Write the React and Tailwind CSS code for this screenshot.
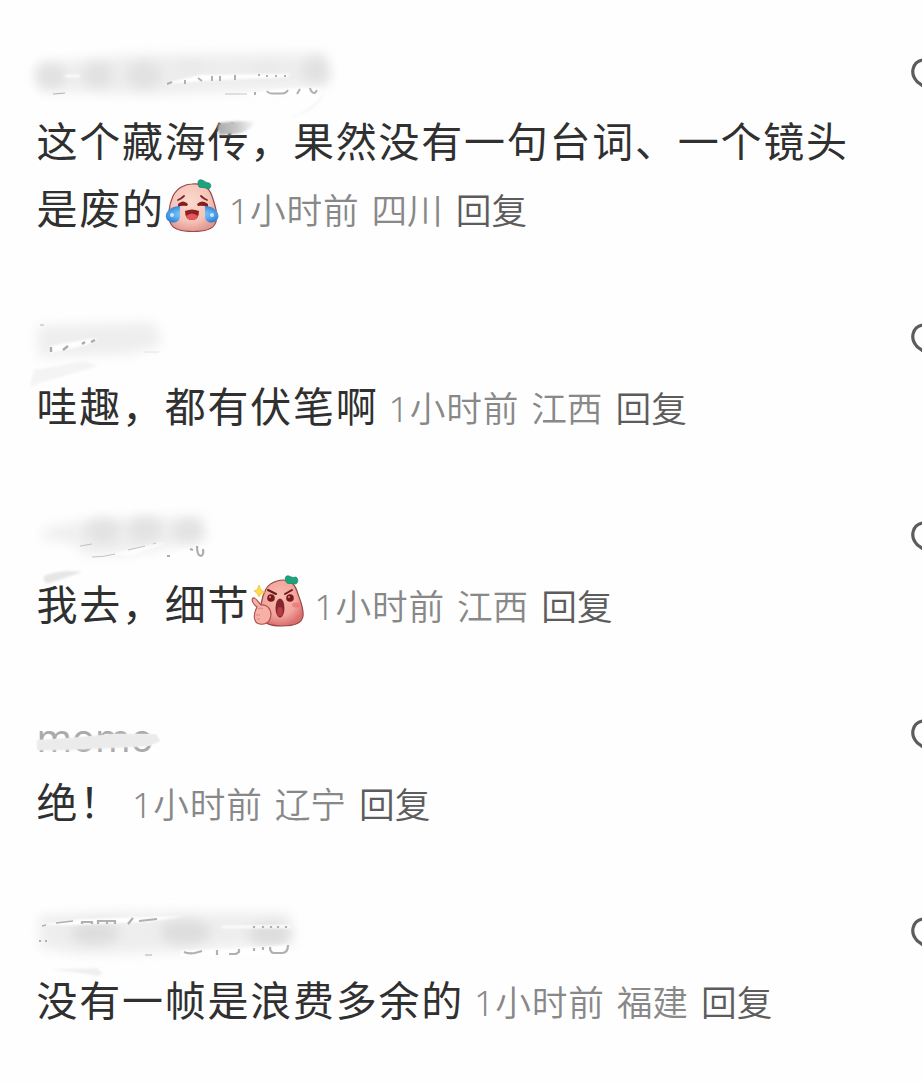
import React from 'react';

// Peach sticker, laughing with tears
function LaughingPeach() {
  return (
    <svg viewBox="0 0 54 56" className="inline-block w-[54px] h-[56px] align-[-10px]">
      <defs>
        <radialGradient id="peachLaugh" cx="45%" cy="38%" r="62%">
          <stop offset="0" stopColor="#fbd9cd" />
          <stop offset="0.65" stopColor="#f6c4b9" />
          <stop offset="1" stopColor="#e39a94" />
        </radialGradient>
        <radialGradient id="tear" cx="50%" cy="50%" r="60%">
          <stop offset="0" stopColor="#b5e2ff" />
          <stop offset="0.5" stopColor="#68b7f5" />
          <stop offset="1" stopColor="#2d7fd0" />
        </radialGradient>
      </defs>
      <path d="M27 6C37 5 44 9 47 18C50 27 54 38 50 46C47 52 38 53.500 28 53.500C17 53.500 9 52 6 46C2 39 4 27 8 18C12 10 20 6 27 6Z" fill="url(#peachLaugh)" stroke="#9a4b4a" strokeWidth="1.2" />
      <path d="M34 9C32 4 33 1 37 2C40 3 41 5 44 5C47 6 46 11 43 11C40 9 37 10 34 9Z" fill="#1ba37b" stroke="#0c8465" strokeWidth=".7" />
      <path d="M13 22Q16 21 19 18M36 18Q39 21 42 22" fill="none" stroke="#7b2727" strokeWidth="1.8" strokeLinecap="round" />
      <path d="M13 26Q18 21 23 26L22 28Q17 27 13 29ZM32 26Q37 21 43 26L43 29Q37 27 33 28Z" fill="#81201f" />
      <path d="M20 33Q27 30 34 33Q34 42 27 42Q20 42 20 33Z" fill="#8c2022" />
      <path d="M21 38Q27 33 33 38Q31 42 27 42Q23 42 21 38Z" fill="#e8555a" />
      <path d="M15 28C8 28 1 32 .8 38C1 46 14 47 15 39ZM40 28C47 28 53 32 53.500 38C53 46 41 47 40 39Z" fill="url(#tear)" />
      <circle cx="7" cy="37" r="2" fill="#e4f6ff" opacity=".8" />
      <circle cx="47" cy="37" r="2" fill="#e4f6ff" opacity=".8" />
    </svg>
  );
}

// Peach sticker, shouting with thumb up
function AmazedPeach() {
  return (
    <svg viewBox="0 0 54 56" className="inline-block w-[54px] h-[56px] align-[-10px]">
      <defs>
        <radialGradient id="peachShout" cx="45%" cy="38%" r="62%">
          <stop offset="0" stopColor="#f8bcb0" />
          <stop offset="0.65" stopColor="#f2a49c" />
          <stop offset="1" stopColor="#dc7070" />
        </radialGradient>
      </defs>
      <path d="M27 7C37 4 44 8 47 17C49 24 54 33 53 42C52 50 43 52 32 52C21 52 14 50 12 44C9 37 11 24 16 15C19 10 23 8 27 7Z" fill="url(#peachShout)" stroke="#984645" strokeWidth="1.2" />
      <path d="M37 9C34 5 35 1 39 2C41 3 43 4 46 3C49 5 48 10 45 10C42 9 39 10 37 9Z" fill="#1ba37b" stroke="#0c8465" strokeWidth=".7" />
      <path d="M9 11L11 16L15 18L11 20L9 23L7 19L4 17L7 16Z" fill="#ffda4a" stroke="#e9b52e" strokeWidth=".6" />
      <path d="M18 16L26 20M42 16L35 20" stroke="#68191b" strokeWidth="2" strokeLinecap="round" />
      <circle cx="21" cy="24" r="3.8" fill="#77191e" />
      <circle cx="40" cy="24" r="3.8" fill="#77191e" />
      <circle cx="20" cy="23" r="1" fill="#eb8582" />
      <circle cx="39" cy="23" r="1" fill="#eb8582" />
      <ellipse cx="46" cy="31" rx="4" ry="2.500" fill="#ec7277" opacity=".7" />
      <ellipse cx="30" cy="34" rx="4.500" ry="9.500" fill="#842630" />
      <ellipse cx="30" cy="37.500" rx="2.800" ry="4.500" fill="#b83b43" />
      <path d="M7 33C3 30 1 26 3 24C6 23 8 28 11 31C17 30 21 35 21 41C20 48 16 51 10 50C3 49 3 40 7 33Z" fill="#f6b0a5" stroke="#a84e4b" strokeWidth="1.1" />
      <path d="M8 35Q11 33 13 35M6 41H10M7 45H10" fill="none" stroke="#dd8580" />
    </svg>
  );
}

function Smudge({ id, viewBox, className, children }) {
  return (
    <svg viewBox={viewBox} className={className} aria-hidden="true">
      <defs>
        <filter id={`${id}-soft`} x="-30%" y="-100%" width="160%" height="300%">
          <feGaussianBlur stdDeviation="6" />
        </filter>
        <filter id={`${id}-fine`} x="-30%" y="-100%" width="160%" height="300%">
          <feGaussianBlur stdDeviation="1.3" />
        </filter>
        <linearGradient id={`${id}-fade`} x1="0" x2="1" y1="0" y2="0">
          <stop offset="0" stopColor="#aaa" />
          <stop offset=".5" stopColor="#c8c8c8" />
          <stop offset="1" stopColor="#fefefe" />
        </linearGradient>
      </defs>
      {children}
    </svg>
  );
}

function SmudgeOne() {
  return (
    <Smudge id="s1" viewBox="0 40 360 110" className="absolute left-0 -top-[4.5px] w-[360px] h-[110px]">
      <path d="M38 63L130 55L325 53L330 84L290 89L150 95L40 91Z" fill="#eeeeee" filter="url(#s1-soft)" />
      <g fill="#d9d9d9" opacity=".6" filter="url(#s1-soft)">
        <ellipse cx="50" cy="76" rx="16" ry="13" />
        <ellipse cx="98" cy="75" rx="15" ry="13" />
        <ellipse cx="144" cy="75" rx="18" ry="13" />
        <ellipse cx="190" cy="67" rx="15" ry="7" opacity=".4" />
        <ellipse cx="265" cy="68" rx="16" ry="6" opacity=".4" />
        <ellipse cx="316" cy="71" rx="14" ry="14" />
      </g>
      <path d="M163 84L200 75L290 74L288 77L220 80ZM240 94L285 89L322 88L312 96L240 97ZM65 75H80V77H65Z" fill="#fff" filter="url(#s1-fine)" />
      <g fill="none" stroke="#b0b0b0" strokeWidth="2">
        <path d="M167 84L172 82M185 80V84M198 78L202 81M212 76V81M220 76V81M235 75V80M258 75H260M267 75V77M276 75V77M285 75V77" />
        <path d="M53 94L65 93" strokeWidth="1.2" />
        <path d="M225 94H247" strokeWidth=".7" />
        <path d="M255 92V95M267 91Q268 93.500 273 93.500H282Q286 93.500 288 90M300 89L297 94M310 88Q311 93 315 93L317 90" />
      </g>
      <path d="M288 119Q312 109 324 93Q320 110 288 119Z" fill="#f7f7f7" filter="url(#s1-fine)" />
      <path d="M219 123Q235 120 256 122Q250 132 235 134L220 135Q216 129 219 123Z" fill="url(#s1-fade)" filter="url(#s1-fine)" />
    </Smudge>
  );
}

function SmudgeTwo() {
  return (
    <Smudge id="s2" viewBox="0 310 220 80" className="absolute left-0 top-[.5px] w-[220px] h-[80px]">
      <path d="M38 326L155 322L162 345L130 354L38 357Z" fill="#eeeeee" filter="url(#s2-soft)" />
      <path d="M34 370L84 361L98 366L40 383L30 387Z" fill="#f4f4f4" filter="url(#s2-fine)" />
      <path d="M50 346L90 339L98 339L86 345L50 353Z" fill="#fff" filter="url(#s2-fine)" />
      <path d="M40 325H44" stroke="#ccc" strokeWidth="1.5" />
      <path d="M51 347V352M63 350L68 346M82 344L85 342M91 342L95 340" stroke="#aaa" strokeWidth="2.4" />
      <path d="M144 352H159" stroke="#e4e4e4" />
    </Smudge>
  );
}

function SmudgeThree() {
  return (
    <Smudge id="s3" viewBox="0 505 240 80" className="absolute left-0 -top-[2.5px] w-[240px] h-[80px]">
      <path d="M43 529L90 519L203 516L206 541L125 555L83 555L76 544L43 539Z" fill="#efefef" filter="url(#s3-soft)" />
      <g fill="#dcdcdc" opacity=".65" filter="url(#s3-soft)">
        <ellipse cx="103" cy="531" rx="17" ry="13" />
        <ellipse cx="145" cy="529" rx="17" ry="13" />
        <ellipse cx="188" cy="531" rx="15" ry="12" />
      </g>
      <path d="M44 576Q62 569 82 572L50 583Q42 584 44 576Z" fill="#e6e6e6" filter="url(#s3-fine)" />
      <path d="M110 554L160 543L164 544L130 556ZM165 558L186 549L207 545L207 560Z" fill="#fff" opacity=".8" filter="url(#s3-fine)" />
      <path d="M80 546L92 544M92 557Q104 557 115 554M128 550L145 546M153 544L156 543" fill="none" stroke="#c2c2c2" strokeWidth="1" />
      <path d="M167 556H170M190 549L193 550M197 546Q197 556 201 556Q204 555 203 549" fill="none" stroke="#acacac" strokeWidth="2.2" />
    </Smudge>
  );
}

function SmudgeFour() {
  return (
    <Smudge id="s4" viewBox="0 710 240 60" className="absolute left-0 top-[4.5px] w-[240px] h-[60px]">
      <path d="M37 740Q75 738 115 734L156 734L160 741L149 746L75 749L37 750Z" fill="#efefef" />
      <path d="M37 741Q80 738 115 734L155 735L160 741L145 746L70 750L38 750Z" fill="#ebebeb" filter="url(#s4-fine)" />
    </Smudge>
  );
}

function SmudgeFive() {
  return (
    <Smudge id="s5" viewBox="0 895 330 90" className="absolute left-0 -top-[6.5px] w-[330px] h-[90px]">
      <path d="M39 914L115 910L290 911L293 941L180 950L80 952L40 946Z" fill="#eeeeee" filter="url(#s5-soft)" />
      <g fill="#d5d5d5" opacity=".7" filter="url(#s5-soft)">
        <ellipse cx="95" cy="931" rx="24" ry="11" />
        <ellipse cx="185" cy="930" rx="25" ry="12" />
        <ellipse cx="270" cy="933" rx="21" ry="12" />
      </g>
      <path d="M40 923L82 917L185 914L146 920L70 923ZM222 924L290 923V926H222ZM181 949L234 947L289 943L287 954H181Z" fill="#fff" filter="url(#s5-fine)" />
      <g fill="none" stroke="#b0b0b0" strokeWidth="2.2">
        <path d="M42 924L46 923M56 921L73 919" strokeWidth="1.5" />
        <path d="M82 922V920H92V922M98 922V919H115V922M107 919V922M128 922L133 916M139 919L157 917M39 939H41M45 939H47" />
        <path d="M145 953H152" strokeWidth="1" />
        <path d="M184 950Q188 952 195 951L202 949M217 948V953M229 952H236L239 950V947M254 924V926M263 924V926M271 924V926M278 924V926M286 924V926M254 946V949M263 945V948M270 945Q270 951 274 951H282Q288 951 288 943" />
      </g>
      <path d="M50 968L96 966L103 971L98 974L75 970Z" fill="#efefef" filter="url(#s5-fine)" />
    </Smudge>
  );
}

const comments = [
  { text: '这个藏海传，果然没有一句台词、一个镜头是废的', sticker: <LaughingPeach />, place: '四川', smudge: <SmudgeOne /> },
  { text: '哇趣，都有伏笔啊', place: '江西', smudge: <SmudgeTwo /> },
  { text: '我去，细节', sticker: <AmazedPeach />, place: '江西', smudge: <SmudgeThree /> },
  { name: 'momo', text: '绝！', place: '辽宁', smudge: <SmudgeFour /> },
  { text: '没有一帧是浪费多余的', place: '福建', smudge: <SmudgeFive /> },
];

function Comment({ name, text, sticker, place, smudge }) {
  return (
    <article className="relative flex justify-between pl-[36.5px] pb-[68px]">
      <div className="w-[830px] shrink-0">
        <div className="h-[63px] text-[38px] leading-[62px] text-[#aaa]">{name}</div>
        <p className="text-[41px] tracking-[1.75px] leading-[67px] text-[#303030]">
          {text}
          {sticker}
          <span className="ml-[10px] text-[35.7px] tracking-normal leading-none font-[350] text-[#888] whitespace-nowrap">
            <span className="tracking-[0.8px]">1小时前</span>
            <span className="ml-[12px]">{place}</span>
            <span className="ml-[13px] text-[#5c5c5c]">回复</span>
          </span>
        </p>
      </div>
      <svg viewBox="0 0 44 40" className="w-[44px] h-[40px] mt-[12.5px] -mr-[33px] shrink-0" fill="none" stroke="#5c5c5c" strokeWidth="3.2">
        <path d="M22 36L6.5 25C-1.5 17 1 5 12 3C16 2 20 5 22 8C24 5 28 2 32 3C43 5 45.500 17 37.500 25Z" strokeLinejoin="round" />
      </svg>
      {smudge}
    </article>
  );
}

export default function App() {
  return (
    <main className="w-full h-[1082px] overflow-hidden bg-[#fefefe] pt-[44.5px] font-['Noto_Sans','Noto_Sans_CJK_SC',sans-serif]">
      {comments.map((comment) => (
        <Comment key={comment.text} {...comment} />
      ))}
    </main>
  );
}
